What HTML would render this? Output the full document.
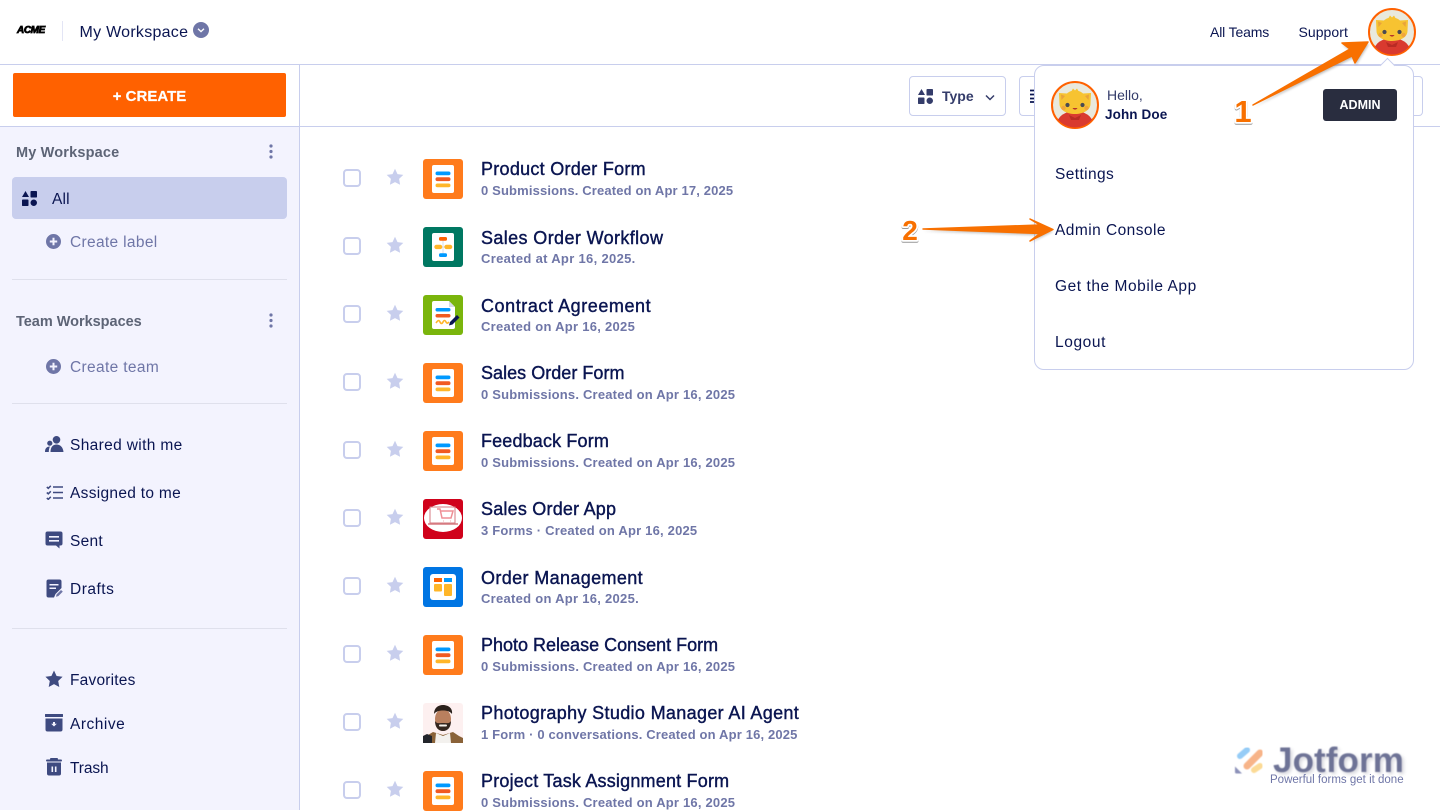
<!DOCTYPE html>
<html><head><meta charset="utf-8"><style>
*{box-sizing:border-box}
html,body{margin:0;padding:0;width:1440px;height:810px;overflow:hidden;background:#fff;font-family:"Liberation Sans",sans-serif;color:#0a1551}
.a{position:absolute;white-space:nowrap}
.side{position:absolute;left:0;top:127px;width:300px;height:683px;background:#f3f3fe;border-right:1px solid #c8ceed}
.hr{position:absolute;left:12px;width:275px;height:1px;background:#dfe0ec}
.nav{font-size:15.5px;color:#0a1551;left:70px;line-height:20px}
.mut{color:#6f76a7}
.hd{font-size:14.5px;font-weight:bold;color:#5d6476;left:16px;line-height:20px}
.ico{position:absolute;left:423px;width:40px;height:40px}
.cb{position:absolute;left:343px;width:18px;height:18px;border:2px solid #c8ceed;border-radius:4px;background:#fff}
.st{position:absolute;left:386px;width:18px;height:18px}
.t{position:absolute;left:481px;font-size:18px;line-height:22px;font-weight:500;color:#0a1551;white-space:nowrap;-webkit-text-stroke:.4px #0a1551}
.s{position:absolute;left:481px;font-size:13px;line-height:16px;font-weight:bold;color:#6f76a7;white-space:nowrap}
.m{position:absolute;left:1055px;font-size:15.5px;line-height:20px;color:#0a1551;white-space:nowrap}
</style></head><body>
<svg width="0" height="0" style="position:absolute">
<defs>
<g id="star"><path d="M9 .8l2.500 5.300 5.800.8-4.200 4 1 5.800L9 14.100 3.900 16.700l1-5.800-4.200-4 5.800-.8z" fill="#c8ceed"/></g>
<g id="form"><rect width="40" height="40" rx="3" fill="#ff7b1c"/><rect x="9" y="6" width="22" height="28" rx="2" fill="#fff"/><rect x="12.500" y="12.500" width="15" height="3.800" rx="1.900" fill="#0099ff"/><rect x="12.500" y="18.300" width="15" height="3.800" rx="1.900" fill="#f15a22"/><rect x="12.500" y="24.500" width="15" height="3.800" rx="1.900" fill="#ffb629"/></g>
<g id="shapes"><path d="M3.500 0l3.500 6H0z"/><rect x="8.500" y="0" width="6.500" height="6.500" rx=".8"/><rect x="0" y="8.500" width="6.500" height="6.500" rx=".8"/><circle cx="11.750" cy="11.750" r="3.250"/></g>
<g id="plus"><circle cx="7.500" cy="7.500" r="7.500" fill="#6f76a7"/><path d="M7.500 3.800v7.400M3.800 7.500h7.400" stroke="#f3f3fe" stroke-width="2"/></g>
<g id="dots" fill="#6f76a7"><circle cx="2" cy="2" r="1.600"/><circle cx="2" cy="7.500" r="1.600"/><circle cx="2" cy="13" r="1.600"/></g>
<clipPath id="cav"><circle cx="24" cy="24" r="22.500"/></clipPath>
<g id="av"><circle cx="24" cy="24" r="23" fill="#e9e9dd" stroke="#ff6100" stroke-width="2"/>
<g clip-path="url(#cav)"><ellipse cx="24" cy="43" rx="18" ry="13" fill="#d93a2f"/>
<path d="M8 12l8 .5c4-4 12-4 16 0l8-.5-.5 11c0 6-7 10-15.500 10S8.500 29 8.500 23z" fill="#f7c331"/>
<path d="M20 11l2-3.500 2 2 2-2 2 3.500z" fill="#f7c331"/>
<path d="M10 13.500l4 1.500-3.500 4zM38 13.500l-4 1.500 3.500 4z" fill="#e8a33a"/>
<circle cx="12.500" cy="27" r="2.200" fill="#f0a53c"/><circle cx="35.500" cy="27" r="2.200" fill="#f0a53c"/>
<circle cx="16.500" cy="24" r="2.100" fill="#4a4a52"/><circle cx="31.500" cy="24" r="2.100" fill="#4a4a52"/>
<path d="M21.500 27c1.500 2.200 3.500 2.200 5 0z" fill="#b5332b"/><path d="M18 34l6 3 6-3-2 5h-8z" fill="#b82b24"/></g></g>
<filter id="blur"><feGaussianBlur stdDeviation="1.200"/></filter>
<filter id="b5"><feGaussianBlur stdDeviation=".4"/></filter>
</defs></svg>

<!-- Top bar -->
<div class="a" style="left:17px;top:24px;font:italic bold 10px/14px 'Liberation Sans',sans-serif;color:#000;letter-spacing:-.4px;-webkit-text-stroke:.8px #000">ACME</div>
<div class="a" style="left:62px;top:21px;width:1px;height:20px;background:#e3e5f5"></div>
<div class="a" style="left:79.500px;top:22px;font-size:16px;line-height:21px;color:#0a1551;letter-spacing:.27px">My Workspace</div>
<svg class="a" style="left:193px;top:22px" width="16" height="16"><circle cx="8" cy="8" r="8" fill="#6f76a7"/><path d="M5 6.800l3 2.800 3-2.800" fill="none" stroke="#fff" stroke-width="1.400"/></svg>
<div class="a" style="left:1210px;top:23px;font-size:14px;line-height:18px;letter-spacing:-.15px">All Teams</div>
<div class="a" style="left:1298.500px;top:23px;font-size:14px;line-height:18px;letter-spacing:.05px">Support</div>
<svg class="a" style="left:1368px;top:8px" width="48" height="48"><use href="#av"/></svg>
<div class="a" style="left:0;top:64px;width:1440px;height:1px;background:#c8ceed"></div>
<div class="a" style="left:299px;top:64px;width:1px;height:63px;background:#c8ceed"></div>
<div class="a" style="left:0;top:126px;width:1440px;height:1px;background:#c8ceed"></div>

<!-- Create -->
<div class="a" style="left:13px;top:73px;width:273px;height:44px;background:#ff6100;border-radius:2px;color:#fff;text-align:center;font-size:15px;line-height:45px;padding-top:.5px;font-weight:bold;-webkit-text-stroke:.2px #fff">+ CREATE</div>

<!-- Toolbar -->
<div class="a" style="left:909px;top:76px;width:97px;height:40px;border:1px solid #c8ceed;border-radius:4px"></div>
<svg class="a" style="left:918px;top:89px;fill:#343c6a" width="15" height="15"><use href="#shapes"/></svg>
<div class="a" style="left:942px;top:87px;font-size:14px;line-height:18px;font-weight:bold;color:#343c6a">Type</div>
<svg class="a" style="left:985px;top:94px" width="10" height="8"><path d="M1 1.500l4 4 4-4" fill="none" stroke="#343c6a" stroke-width="1.500"/></svg>
<div class="a" style="left:1019px;top:76px;width:30px;height:40px;border:1px solid #c8ceed;border-right:0;border-radius:4px 0 0 4px"></div>
<svg class="a" style="left:1030px;top:89px" width="8" height="14"><path d="M0 1.500h8M0 5.500h8M0 9.500h8M0 13h8" stroke="#0a1551" stroke-width="1.800"/></svg>
<div class="a" style="left:1390px;top:76px;width:33px;height:40px;border:1px solid #c8ceed;border-left:0;border-radius:0 4px 4px 0"></div>

<!-- Sidebar -->
<div class="side"></div>
<div class="a hd" style="top:143px;letter-spacing:.17px">My Workspace</div>
<svg class="a" style="left:268.500px;top:144px" width="4" height="15"><use href="#dots"/></svg>
<div class="a" style="left:12px;top:177px;width:275px;height:42px;background:#c8ceed;border-radius:4px"></div>
<svg class="a" style="left:22px;top:191px;fill:#0a1551" width="16" height="16"><use href="#shapes"/></svg>
<div class="a nav" style="left:52px;top:190px;letter-spacing:.2px">All</div>
<svg class="a" style="left:46px;top:234px" width="15" height="15"><use href="#plus"/></svg>
<div class="a nav mut" style="top:233px;letter-spacing:.33px">Create label</div>
<div class="hr" style="top:279px"></div>
<div class="a hd" style="top:312px;letter-spacing:-.02px">Team Workspaces</div>
<svg class="a" style="left:268.500px;top:313px" width="4" height="15"><use href="#dots"/></svg>
<svg class="a" style="left:46px;top:359px" width="15" height="15"><use href="#plus"/></svg>
<div class="a nav mut" style="top:358px;letter-spacing:.35px">Create team</div>
<div class="hr" style="top:403px"></div>

<svg class="a" style="left:45px;top:436px" width="19" height="17" fill="#3e4a80"><circle cx="11.500" cy="3.800" r="3.800"/><path d="M5.500 16c0-5 2.500-7.500 6-7.500s6.500 2.500 7 7.500z"/><circle cx="4.800" cy="7.200" r="2.600"/><path d="M0 16c0-3.500 1.500-5.500 5-5.500-.8 1.500-1.200 3.300-1.200 5.500z"/></svg>
<div class="a nav" style="top:436px;letter-spacing:.35px">Shared with me</div>
<svg class="a" style="left:46px;top:485px" width="17" height="15" fill="none" stroke="#3e4a80" stroke-width="1.500"><path d="M7 2h10M7 7.500h10M7 13h10"/><path d="M.8 2l1.500 1.300L4.800.8M.8 7.500l1.500 1.300 2.500-2.500M.8 13l1.500 1.300 2.500-2.500"/></svg>
<div class="a nav" style="top:484px;letter-spacing:.3px">Assigned to me</div>
<svg class="a" style="left:45px;top:531px" width="18" height="18" fill="#3e4a80"><path d="M2.500.5h13a2 2 0 012 2v10a2 2 0 01-2 2h-1v3l-3.500-3h-8.500a2 2 0 01-2-2v-10a2 2 0 012-2z"/><path d="M4 5h10v1.600H4zM4 9h10v1.600H4z" fill="#f3f3fe"/></svg>
<div class="a nav" style="top:532px;letter-spacing:.25px">Sent</div>
<svg class="a" style="left:46px;top:579px" width="17" height="19" fill="#3e4a80"><path d="M2.500.500h11a2 2 0 012 2v6.500l-6 6-1.500 3.500H2.500a2 2 0 01-2-2v-14a2 2 0 012-2z"/><path d="M3.500 5h9v1.500h-9zM3.500 8.500h6.500V10H3.500z" fill="#f3f3fe"/><path d="M10.500 15.500l4.500-4.500 1.800 1.600-4.500 4.500-2.300.6z" fill="#6f76a7"/></svg>
<div class="a nav" style="top:580px;letter-spacing:.5px">Drafts</div>
<div class="hr" style="top:628px"></div>
<svg class="a" style="left:45px;top:670px" width="18" height="18" fill="#3e4a80"><path d="M9 .5l2.600 5.500 6 .8-4.400 4.200 1.100 6L9 14.100 3.700 17l1.100-6L.4 6.800l6-.8z"/></svg>
<div class="a nav" style="top:671px;letter-spacing:.2px">Favorites</div>
<svg class="a" style="left:45px;top:714px" width="18" height="18" fill="#3e4a80"><rect x="0" y="0" width="18" height="3" rx=".5"/><path d="M.5 4.500h17v11a2 2 0 01-2 2h-13a2 2 0 01-2-2z"/><path d="M9 12.500L6.200 9.800h1.800V8h2v1.800h1.800z" fill="#f3f3fe"/></svg>
<div class="a nav" style="top:715px;letter-spacing:.5px">Archive</div>
<svg class="a" style="left:46px;top:758px" width="16" height="18" fill="#3e4a80"><rect x="0" y="1.500" width="16" height="2" rx="1"/><rect x="4" y="0" width="8" height="2" rx="1"/><path d="M1 4.500h14v11a2 2 0 01-2 2H3a2 2 0 01-2-2z"/><path d="M5.500 8.500h1.600v5.500H5.500zM8.900 8.500h1.600v5.500H8.900z" fill="#f3f3fe"/></svg>
<div class="a nav" style="top:759px;letter-spacing:-.1px">Trash</div>

<!-- Rows -->
<div class="cb" style="top:169px"></div><svg class="st" style="top:168px"><use href="#star"/></svg>
<svg class="ico" style="top:159px"><use href="#form"/></svg>
<div class="t" style="top:158px;letter-spacing:.27px">Product Order Form</div>
<div class="s" style="top:183px;letter-spacing:.15px">0 Submissions. Created on Apr 17, 2025</div>

<div class="cb" style="top:237px"></div><svg class="st" style="top:236px"><use href="#star"/></svg>
<svg class="ico" style="top:227px"><rect width="40" height="40" rx="3" fill="#007862"/><rect x="9" y="6" width="22" height="28" rx="2" fill="#fff"/><path d="M20 13.500v14M14 20h12" stroke="#d8dce8" stroke-width="1"/><rect x="16" y="10" width="8" height="3.700" rx="1.500" fill="#ff6100"/><rect x="11.300" y="17.700" width="8" height="4.400" rx="2.200" fill="#ffb629"/><rect x="21.300" y="17.700" width="8" height="4.400" rx="2.200" fill="#ffb629"/><rect x="16" y="26.300" width="8" height="3.700" rx="1.500" fill="#0099ff"/></svg>
<div class="t" style="top:227px;letter-spacing:.38px">Sales Order Workflow</div>
<div class="s" style="top:251px;letter-spacing:.32px">Created at Apr 16, 2025.</div>

<div class="cb" style="top:305px"></div><svg class="st" style="top:304px"><use href="#star"/></svg>
<svg class="ico" style="top:295px"><rect width="40" height="40" rx="3" fill="#7ab50c"/><path d="M9 8a2 2 0 012-2h15l6 6v20a2 2 0 01-2 2H11a2 2 0 01-2-2z" fill="#fff"/><path d="M26 6v6h6z" fill="#d5dbe6"/><rect x="12.500" y="13" width="15" height="3.500" rx="1.700" fill="#0099ff"/><rect x="12.500" y="19" width="15" height="3.500" rx="1.700" fill="#f15a22"/><path d="M13 28c2-3 3-3 4-1s2 2 3 0 2-2 3 0 2 1 3 0" fill="none" stroke="#ffb629" stroke-width="1.600"/><path d="M27 27l7-7 2.500 2.500-7 7-3.500 1z" fill="#0a1551"/></svg>
<div class="t" style="top:295px;letter-spacing:.56px">Contract Agreement</div>
<div class="s" style="top:319px;letter-spacing:.28px">Created on Apr 16, 2025</div>

<div class="cb" style="top:373px"></div><svg class="st" style="top:372px"><use href="#star"/></svg>
<svg class="ico" style="top:363px"><use href="#form"/></svg>
<div class="t" style="top:362px;letter-spacing:.03px">Sales Order Form</div>
<div class="s" style="top:387px;letter-spacing:.2px">0 Submissions. Created on Apr 16, 2025</div>

<div class="cb" style="top:441px"></div><svg class="st" style="top:440px"><use href="#star"/></svg>
<svg class="ico" style="top:431px"><use href="#form"/></svg>
<div class="t" style="top:430px;letter-spacing:.15px">Feedback Form</div>
<div class="s" style="top:455px;letter-spacing:.2px">0 Submissions. Created on Apr 16, 2025</div>

<div class="cb" style="top:509px"></div><svg class="st" style="top:508px"><use href="#star"/></svg>
<svg class="ico" style="top:499px"><rect width="40" height="40" rx="3" fill="#d0021b"/><ellipse cx="20" cy="19" rx="19" ry="14" fill="#fff"/><rect x="7" y="8" width="25" height="16" fill="none" stroke="#d67a80" stroke-width="1"/><path d="M5 25h30" stroke="#d67a80" stroke-width="1.500"/><path d="M14 10h3l2 9h9l2-7H18M20 22h.5M27 22h.5" fill="none" stroke="#ef8f96" stroke-width="1.500"/></svg>
<div class="t" style="top:498px;letter-spacing:.21px">Sales Order App</div>
<div class="s" style="top:523px;letter-spacing:.2px">3 Forms · Created on Apr 16, 2025</div>

<div class="cb" style="top:577px"></div><svg class="st" style="top:576px"><use href="#star"/></svg>
<svg class="ico" style="top:567px"><rect width="40" height="40" rx="3" fill="#0075e3"/><rect x="7" y="7" width="26" height="26" rx="3" fill="#fff"/><rect x="11" y="11" width="8" height="4" fill="#ff6100"/><rect x="21" y="11" width="8" height="4" fill="#0099ff"/><rect x="11" y="17" width="8" height="7.500" rx="1" fill="#ffb629"/><rect x="21" y="17" width="8" height="12" rx="1" fill="#ffb629"/></svg>
<div class="t" style="top:567px;letter-spacing:.37px">Order Management</div>
<div class="s" style="top:591px;letter-spacing:.28px">Created on Apr 16, 2025.</div>

<div class="cb" style="top:645px"></div><svg class="st" style="top:644px"><use href="#star"/></svg>
<svg class="ico" style="top:635px"><use href="#form"/></svg>
<div class="t" style="top:634px;letter-spacing:0">Photo Release Consent Form</div>
<div class="s" style="top:659px;letter-spacing:.2px">0 Submissions. Created on Apr 16, 2025</div>

<div class="cb" style="top:713px"></div><svg class="st" style="top:712px"><use href="#star"/></svg>
<svg class="ico" style="top:703px"><rect width="40" height="40" rx="3" fill="#fdf0f0"/><path d="M0 40v-5l10-6 10 3 10-3 6 4 4 2v5z" fill="#8a6238"/><path d="M0 40v-7l4-2 5 2v7z" fill="#23252b"/><path d="M13 30l7 3 7-3 1 10H12z" fill="#f3f1ee"/><ellipse cx="20" cy="16" rx="8" ry="10" fill="#b97f5e"/><path d="M11 11c0-6 4-9 9-9s10 3 9 9c-2-3-6-3.500-9-3.500S13 8 11 11z" fill="#2b211c"/><path d="M12 18c2 3 4 2 8 2s6 1 8-2c0 6-3 10-8 10s-8-4-8-10z" fill="#33251e"/><rect x="16" y="21.500" width="8" height="2" rx="1" fill="#f5f0ea"/></svg>
<div class="t" style="top:702px;letter-spacing:.34px">Photography Studio Manager AI Agent</div>
<div class="s" style="top:727px;letter-spacing:.16px">1 Form · 0 conversations. Created on Apr 16, 2025</div>

<div class="cb" style="top:781px"></div><svg class="st" style="top:780px"><use href="#star"/></svg>
<svg class="ico" style="top:771px"><use href="#form"/></svg>
<div class="t" style="top:770px;letter-spacing:.2px">Project Task Assignment Form</div>
<div class="s" style="top:795px;letter-spacing:.2px">0 Submissions. Created on Apr 16, 2025</div>

<!-- Watermark -->
<svg class="a" style="left:1234px;top:746px" width="36" height="36"><g filter="url(#b5)" opacity=".8" fill="none" stroke-linecap="round"><path d="M6 10L13 4" stroke="#7cc0f5" stroke-width="6"/><path d="M13 20L26 7" stroke="#f6a26c" stroke-width="7"/><path d="M20 24l6-4" stroke="#fbd27c" stroke-width="6"/><path d="M1 20.500l7 7H2.500A1.500 1.500 0 011 26z" fill="#6f76a7" stroke="none"/></g></svg>
<div class="a" style="left:1273px;top:741px;font-size:35px;line-height:40px;font-weight:bold;color:#6e7396;text-shadow:2px 2px 3px rgba(120,120,140,.3);letter-spacing:.1px;filter:blur(.4px)">Jotform</div>
<div class="a" style="left:1270px;top:773px;font-size:11.500px;line-height:15px;color:#6f76a7;filter:blur(.3px)">Powerful forms get it done</div>

<!-- Dropdown -->
<div class="a" style="left:1034px;top:65px;width:380px;height:305px;background:#fff;border:1px solid #c8ceed;border-radius:10px"></div>
<div class="a" style="left:1382px;top:60px;width:11px;height:11px;background:#fff;border-left:1px solid #c8ceed;border-top:1px solid #c8ceed;transform:rotate(45deg)"></div>
<svg class="a" style="left:1051px;top:81px" width="48" height="48"><use href="#av"/></svg>
<div class="a" style="left:1107px;top:87px;font-size:14px;line-height:17px;color:#343c6a">Hello,</div>
<div class="a" style="left:1105px;top:106px;font-size:13.500px;line-height:17px;font-weight:bold;color:#0a1551;letter-spacing:.1px">John Doe</div>
<div class="a" style="left:1323px;top:89px;width:74px;height:32px;background:#292d3f;border-radius:3px;color:#fff;text-align:center;font-size:12.500px;line-height:32px;font-weight:bold">ADMIN</div>
<div class="m" style="top:165px;letter-spacing:.4px">Settings</div>
<div class="m" style="top:221px;letter-spacing:.45px">Admin Console</div>
<div class="m" style="top:277px;letter-spacing:.55px">Get the Mobile App</div>
<div class="m" style="top:333px;letter-spacing:.6px">Logout</div>

<!-- Arrows -->
<svg class="a" style="left:0;top:0" width="1440" height="810">
<path d="M1253 105L1350 49 1342 43 1368 42 1355 63 1352 56z" fill="#666" opacity=".45" filter="url(#blur)" transform="translate(1 2)"/>
<path d="M1253 105L1350 49 1342 43 1368 42 1355 63 1352 56z" fill="#f87000" stroke="#f87000" stroke-width="1.500" stroke-linejoin="round"/>
<path d="M923 229L1040 225 1030 219 1053 229.500 1030 241 1040 233.500z" fill="#666" opacity=".4" filter="url(#blur)" transform="translate(0 2)"/>
<path d="M923 229L1040 225 1030 219 1053 229.500 1030 241 1040 233.500z" fill="#f87000" stroke="#f87000" stroke-width="1.500" stroke-linejoin="round"/>
<text x="1243" y="122" text-anchor="middle" font-family="Liberation Sans,sans-serif" font-size="31" font-weight="bold" fill="#f87000" stroke="#fff" stroke-width="3.500" stroke-linejoin="round" paint-order="stroke" style="filter:drop-shadow(0 1px 0 #999)">1</text>
<text x="910" y="240" text-anchor="middle" font-family="Liberation Sans,sans-serif" font-size="28" font-weight="bold" fill="#f87000" stroke="#fff" stroke-width="3.500" stroke-linejoin="round" paint-order="stroke" style="filter:drop-shadow(0 1px 0 #999)">2</text>
</svg>
</body></html>
